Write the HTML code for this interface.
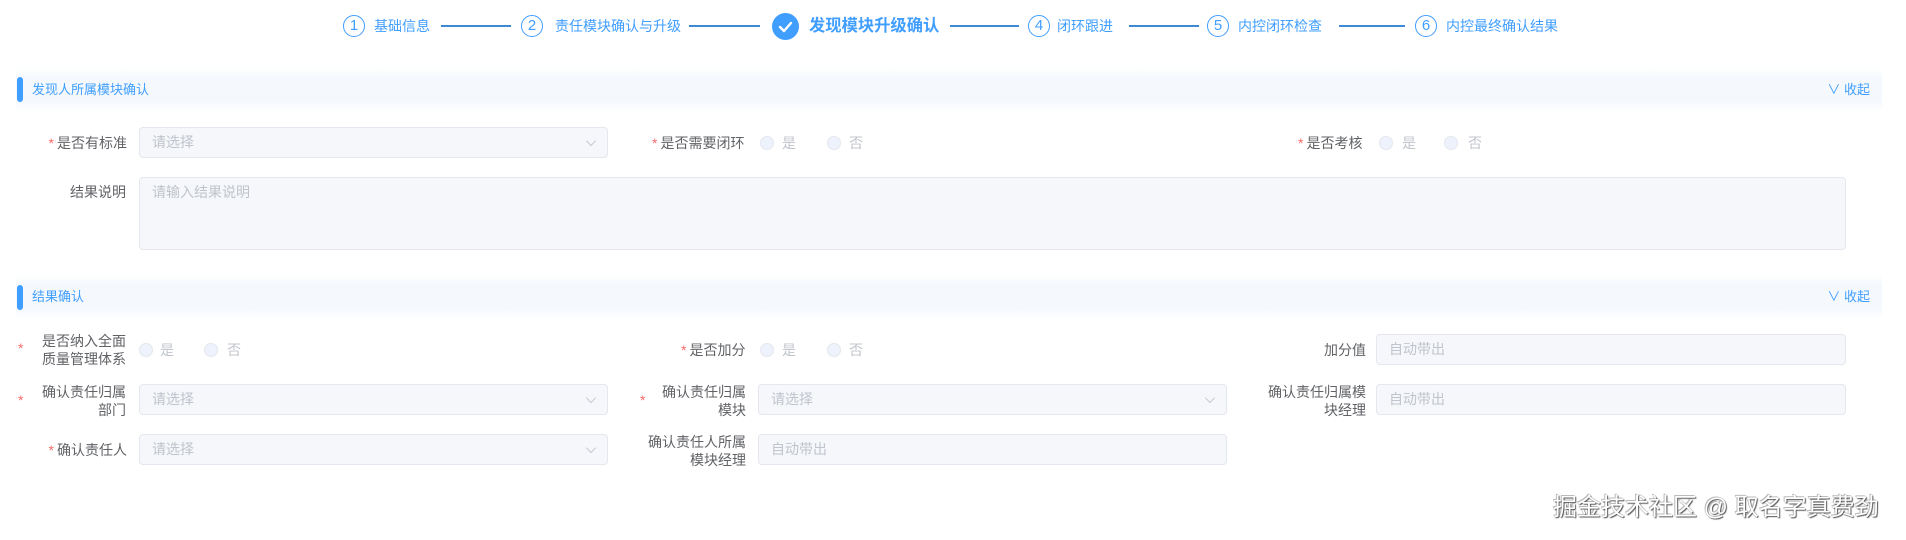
<!DOCTYPE html>
<html><head><meta charset="utf-8"><style>
*{margin:0;padding:0;box-sizing:border-box}
body{width:1906px;height:540px;background:#fff;position:relative;overflow:hidden;font-family:"Liberation Sans","Noto Sans CJK SC",sans-serif;color:#606266}
.a{position:absolute;white-space:nowrap}
.circ{position:absolute;width:22px;height:22px;border:1px solid #409eff;border-radius:50%;color:#409eff;font-size:15px;text-align:center;line-height:20px;top:15px}
.st{position:absolute;top:16px;font-size:14px;color:#409eff;line-height:20px;white-space:nowrap}
.ln{position:absolute;top:25px;height:2px;background:#3d8ad8}
.band{position:absolute;left:16px;width:1866px;height:46px;background:linear-gradient(#fff,#f5f9fd 25%,#f5f9fd 75%,#fff)}
.bar{position:absolute;left:17px;width:6px;height:25px;background:#409eff;border-radius:3px}
.ttl{position:absolute;left:32px;font-size:13px;color:#409eff;line-height:18px}
.fold{position:absolute;right:36px;font-size:13px;color:#409eff;line-height:18px}
.lbl{position:absolute;font-size:14px;color:#606266;text-align:right;line-height:18px;white-space:nowrap}
.star{color:#f56c6c;margin-right:3px}
.inp{position:absolute;height:31px;background:#f5f7fa;border:1px solid #e4e7ed;border-radius:4px;font-size:14px;color:#c0c4cc;padding-left:12px;line-height:29px}
.chev{position:absolute;right:12px;top:9px;width:8px;height:8px;border-right:1px solid #c0c4cc;border-bottom:1px solid #c0c4cc;transform:rotate(45deg) scale(.9)}
.rd{position:absolute;width:14px;height:14px;border:1px solid #e4e7ed;background:#edf2fc;border-radius:50%}
.rt{position:absolute;font-size:14px;color:#c0c4cc;line-height:18px}
</style></head><body>
<div class="circ" style="left:343px">1</div><div class="st" style="left:374px">基础信息</div>
<div class="ln" style="left:441px;width:70px"></div>
<div class="circ" style="left:521px">2</div><div class="st" style="left:555px">责任模块确认与升级</div>
<div class="ln" style="left:689px;width:71px"></div>
<div style="position:absolute;left:772px;top:13px;width:27px;height:27px;border-radius:50%;background:#409eff"><svg width="27" height="27"><path d="M8 14 L12 18 L19 10" stroke="#fff" stroke-width="2.4" fill="none" stroke-linecap="round" stroke-linejoin="round"/></svg></div>
<div class="st" style="left:809px;top:15px;font-size:16.3px;font-weight:bold;line-height:22px">发现模块升级确认</div>
<div class="ln" style="left:950px;width:69px"></div>
<div class="circ" style="left:1028px">4</div><div class="st" style="left:1057px">闭环跟进</div>
<div class="ln" style="left:1129px;width:70px"></div>
<div class="circ" style="left:1207px">5</div><div class="st" style="left:1238px">内控闭环检查</div>
<div class="ln" style="left:1339px;width:66px"></div>
<div class="circ" style="left:1415px">6</div><div class="st" style="left:1446px">内控最终确认结果</div>

<div class="band" style="top:67px"></div><div class="bar" style="top:77px"></div>
<div class="ttl" style="top:81px">发现人所属模块确认</div>
<div class="fold" style="top:81px">∨ 收起</div>

<div class="lbl" style="right:1779px;top:134px"><span class="star">*</span>是否有标准</div>
<div class="inp" style="left:139px;top:127px;width:469px">请选择<span class="chev"></span></div>
<div class="lbl" style="left:652px;top:134px"><span class="star">*</span>是否需要闭环</div>
<div class="rd" style="left:760px;top:136px"></div><div class="rt" style="left:782px;top:134px">是</div>
<div class="rd" style="left:827px;top:136px"></div><div class="rt" style="left:849px;top:134px">否</div>
<div class="lbl" style="left:1298px;top:134px"><span class="star">*</span>是否考核</div>
<div class="rd" style="left:1379px;top:136px"></div><div class="rt" style="left:1402px;top:134px">是</div>
<div class="rd" style="left:1444px;top:136px"></div><div class="rt" style="left:1468px;top:134px">否</div>

<div class="lbl" style="right:1780px;top:183px">结果说明</div>
<div class="inp" style="left:139px;top:177px;width:1707px;height:73px;line-height:18px;padding-top:5px">请输入结果说明</div>

<div class="band" style="top:274px"></div><div class="bar" style="top:285px"></div>
<div class="ttl" style="top:288px">结果确认</div>
<div class="fold" style="top:288px">∨ 收起</div>

<div class="a star" style="left:18px;top:340px;font-size:14px">*</div>
<div class="lbl" style="right:1780px;top:332px">是否纳入全面<br>质量管理体系</div>
<div class="rd" style="left:139px;top:343px"></div><div class="rt" style="left:160px;top:341px">是</div>
<div class="rd" style="left:204px;top:343px"></div><div class="rt" style="left:227px;top:341px">否</div>
<div class="lbl" style="left:681px;top:341px"><span class="star">*</span>是否加分</div>
<div class="rd" style="left:760px;top:343px"></div><div class="rt" style="left:782px;top:341px">是</div>
<div class="rd" style="left:827px;top:343px"></div><div class="rt" style="left:849px;top:341px">否</div>
<div class="lbl" style="right:540px;top:341px">加分值</div>
<div class="inp" style="left:1376px;top:334px;width:470px">自动带出</div>

<div class="a star" style="left:18px;top:392px;font-size:14px">*</div>
<div class="lbl" style="right:1780px;top:383px">确认责任归属<br>部门</div>
<div class="inp" style="left:139px;top:384px;width:469px">请选择<span class="chev"></span></div>
<div class="a star" style="left:640px;top:392px;font-size:14px">*</div>
<div class="lbl" style="right:1160px;top:383px">确认责任归属<br>模块</div>
<div class="inp" style="left:758px;top:384px;width:469px">请选择<span class="chev"></span></div>
<div class="lbl" style="right:540px;top:383px">确认责任归属模<br>块经理</div>
<div class="inp" style="left:1376px;top:384px;width:470px">自动带出</div>

<div class="lbl" style="right:1779px;top:441px"><span class="star">*</span>确认责任人</div>
<div class="inp" style="left:139px;top:434px;width:469px">请选择<span class="chev"></span></div>
<div class="lbl" style="right:1160px;top:433px">确认责任人所属<br>模块经理</div>
<div class="inp" style="left:758px;top:434px;width:469px">自动带出</div>

<div class="a" style="left:1553px;top:494px;font-size:24px;line-height:28px;color:#fff;text-shadow:1px 1px 1px #555,-1px -1px 0 #bbb,0 0 1px #666">掘金技术社区 @ 取名字真费劲</div>
</body></html>
